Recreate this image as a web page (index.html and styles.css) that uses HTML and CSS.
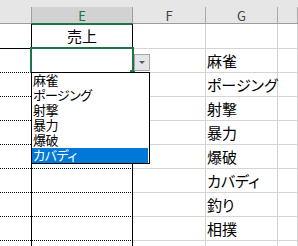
FILE: index.html
```
<!DOCTYPE html>
<html lang="ja">

<head>
  <meta charset="UTF-8" />
  <title>売上</title>
  <link rel="stylesheet" href="styles.css">
</head>

<body>
  <div class="sheet">
    <div class="top-strip"></div>

    <div class="grid">
      <!-- column headers -->
      <div class="hd"></div>
      <div class="hd hd-sel">E</div>
      <div class="hd">F</div>
      <div class="hd">G</div>
      <div class="hd"></div>

      <!-- row 1 -->
      <div class="c c-left c-solid"></div>
      <div class="c c-e c-solid c-title">売上</div>
      <div class="c c-grid"></div>
      <div class="c c-grid"></div>
      <div class="c c-grid"></div>
    </div>

    <div class="grid rows" id="rows">
      <!-- rows filled by script -->
    </div>

    <div class="selection"></div>
    <div class="fill-handle"></div>
    <div class="drop-btn"><span class="arrow"></span></div>

    <ul class="drop-list">
      <li><span>麻雀</span></li>
      <li><span>ポージング</span></li>
      <li><span>射撃</span></li>
      <li><span>暴力</span></li>
      <li><span>爆破</span></li>
      <li class="active"><span>カバディ</span></li>
    </ul>
  </div>

  <script>
    const names = ['麻雀', 'ポージング', '射撃', '暴力', '爆破', 'カバディ', '釣り', '相撲', ''];
    const rows = document.getElementById('rows');

    names.forEach(name => {
      rows.innerHTML += `
        <div class="c c-left c-dot"></div>
        <div class="c c-e c-dot"></div>
        <div class="c c-grid"></div>
        <div class="c c-grid">${name}</div>
        <div class="c c-grid"></div>
      `;
    });
  </script>
</body>

</html>
```

FILE: styles.css
```
* {
  box-sizing: border-box;
  margin: 0;
  padding: 0;
}

html,
body {
  width: 298px;
  height: 246px;
  overflow: hidden;
  background: #fff;
}

body {
  font-family: "Noto Sans CJK JP", "Noto Sans", sans-serif;
  color: #000;
}

.sheet {
  position: relative;
  height: 246px;
  overflow: hidden;
}

.top-strip {
  height: 7px;
  background: #e6e6e6;
}

.grid {
  display: grid;
  grid-template-columns: 31px 102px 73px 72px 1fr;
  grid-template-rows: 17px 25px;
}

.grid.rows {
  grid-template-rows: none;
  grid-auto-rows: 24px;
}

/* column headers */
.hd {
  background: #e6e6e6;
  border-right: 1px solid #ababab;
  border-bottom: 1px solid #9b9b9b;
  color: #444;
  font-size: 13px;
  line-height: 13px;
  padding-top: 2px;
  text-align: center;
}

.hd:first-child {
  border-right: none;
}

.hd-sel {
  background: #d2d2d2;
  color: #217346;
  border-left: 1px solid #a0a0a0;
  border-right: 1px solid #a0a0a0;
  border-bottom: 1px solid #217346;
  box-shadow: 0 1px 0 #217346;
}

/* cells */
.c {
  font-size: 15px;
  line-height: 24px;
  padding-left: 1px;
  white-space: nowrap;
  font-feature-settings: "palt";
}

.c-left.c-solid,
.c-e.c-solid {
  border-bottom: 1px solid #000;
}

.c-dot {
  border-bottom: 1px dotted #000;
}

.c-e {
  border-left: 1px solid #000;
  border-right: 1px solid #000;
}

.c-grid {
  border-right: 1px solid #d4d4d4;
  border-bottom: 1px solid #d4d4d4;
}

.c-title {
  text-align: center;
  padding-left: 0;
}

/* active cell */
.selection {
  position: absolute;
  left: 30px;
  top: 47px;
  width: 104px;
  height: 26px;
  border: 2px solid #217346;
  border-bottom: none;
}

.fill-handle {
  position: absolute;
  left: 130px;
  top: 70px;
  width: 5px;
  height: 5px;
  background: #217346;
}

.drop-btn {
  position: absolute;
  left: 134px;
  top: 54px;
  width: 16px;
  height: 17px;
  background: #e3e5ea;
  border: 1px solid #a6a6a6;
}

.arrow {
  position: absolute;
  left: 4px;
  top: 6px;
  border-left: 3px solid transparent;
  border-right: 3px solid transparent;
  border-top: 3px solid #5a5a5a;
}

.drop-list {
  position: absolute;
  left: 31px;
  top: 72px;
  width: 119px;
  height: 92px;
  background: #fff;
  border: 1px solid #000;
  padding-right: 1px;
  list-style: none;
}

.drop-list li {
  display: flex;
  align-items: center;
  height: 15px;
  overflow: hidden;
  padding-left: 1px;
  white-space: nowrap;
}

.drop-list li span {
  font-family: "Liberation Sans", "Noto Sans CJK JP", sans-serif;
  font-size: 13px;
  line-height: 13px;
  letter-spacing: -0.5px;
  font-feature-settings: "palt";
}

.drop-list li.active {
  background: #0078d7;
  color: #fff;
}
```
